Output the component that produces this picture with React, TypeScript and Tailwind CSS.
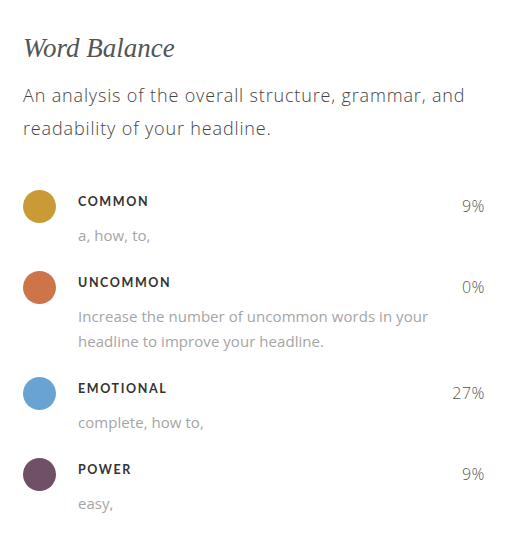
import React from "react";

const rows = [
  { name: "COMMON", color: "bg-[#c99b34]", pct: "9%", text: "a, how, to," },
  {
    name: "UNCOMMON",
    color: "bg-[#cd7449]",
    pct: "0%",
    text: "Increase the number of uncommon words in your headline to improve your headline.",
  },
  { name: "EMOTIONAL", color: "bg-[#68a3d4]", pct: "27%", text: "complete, how to," },
  { name: "POWER", color: "bg-[#705066]", pct: "9%", text: "easy," },
];

export default function App() {
  return (
    <div className="w-[524px] h-[543px] bg-white pl-[23px] pr-[39px] pt-[31px]" style={{ fontFamily: "'Open Sans', sans-serif" }}>
      <h1 className="text-[27px] leading-[34px] italic text-[#555]" style={{ fontFamily: "'Liberation Serif', serif" }}>
        Word Balance
      </h1>
      <p className="mt-[14px] text-[18px] leading-[33px] font-light tracking-[0.85px] text-[#444] pr-[10px]">
        An analysis of the overall structure, grammar, and readability of your headline.
      </p>
      <div className="mt-[45px] flex flex-col gap-[23px]">
        {rows.map((r) => (
          <div key={r.name} className="flex items-start">
            <div className={`w-[33px] h-[33px] rounded-full shrink-0 ${r.color}`} />
            <div className="ml-[22px] flex-1 pr-[16px]">
              <div className="text-[12.5px] leading-[24px] font-bold tracking-[1.6px] text-[#333]" style={{ fontFamily: "Lato, sans-serif" }}>{r.name}</div>
              <div className="mt-[9px] text-[15px] leading-[25px] tracking-[0.05px] text-[#a5a5a5]">{r.text}</div>
            </div>
            <div className="text-[16px] leading-[33px] text-[#555] font-light tracking-[0.5px]">{r.pct}</div>
          </div>
        ))}
      </div>
    </div>
  );
}
